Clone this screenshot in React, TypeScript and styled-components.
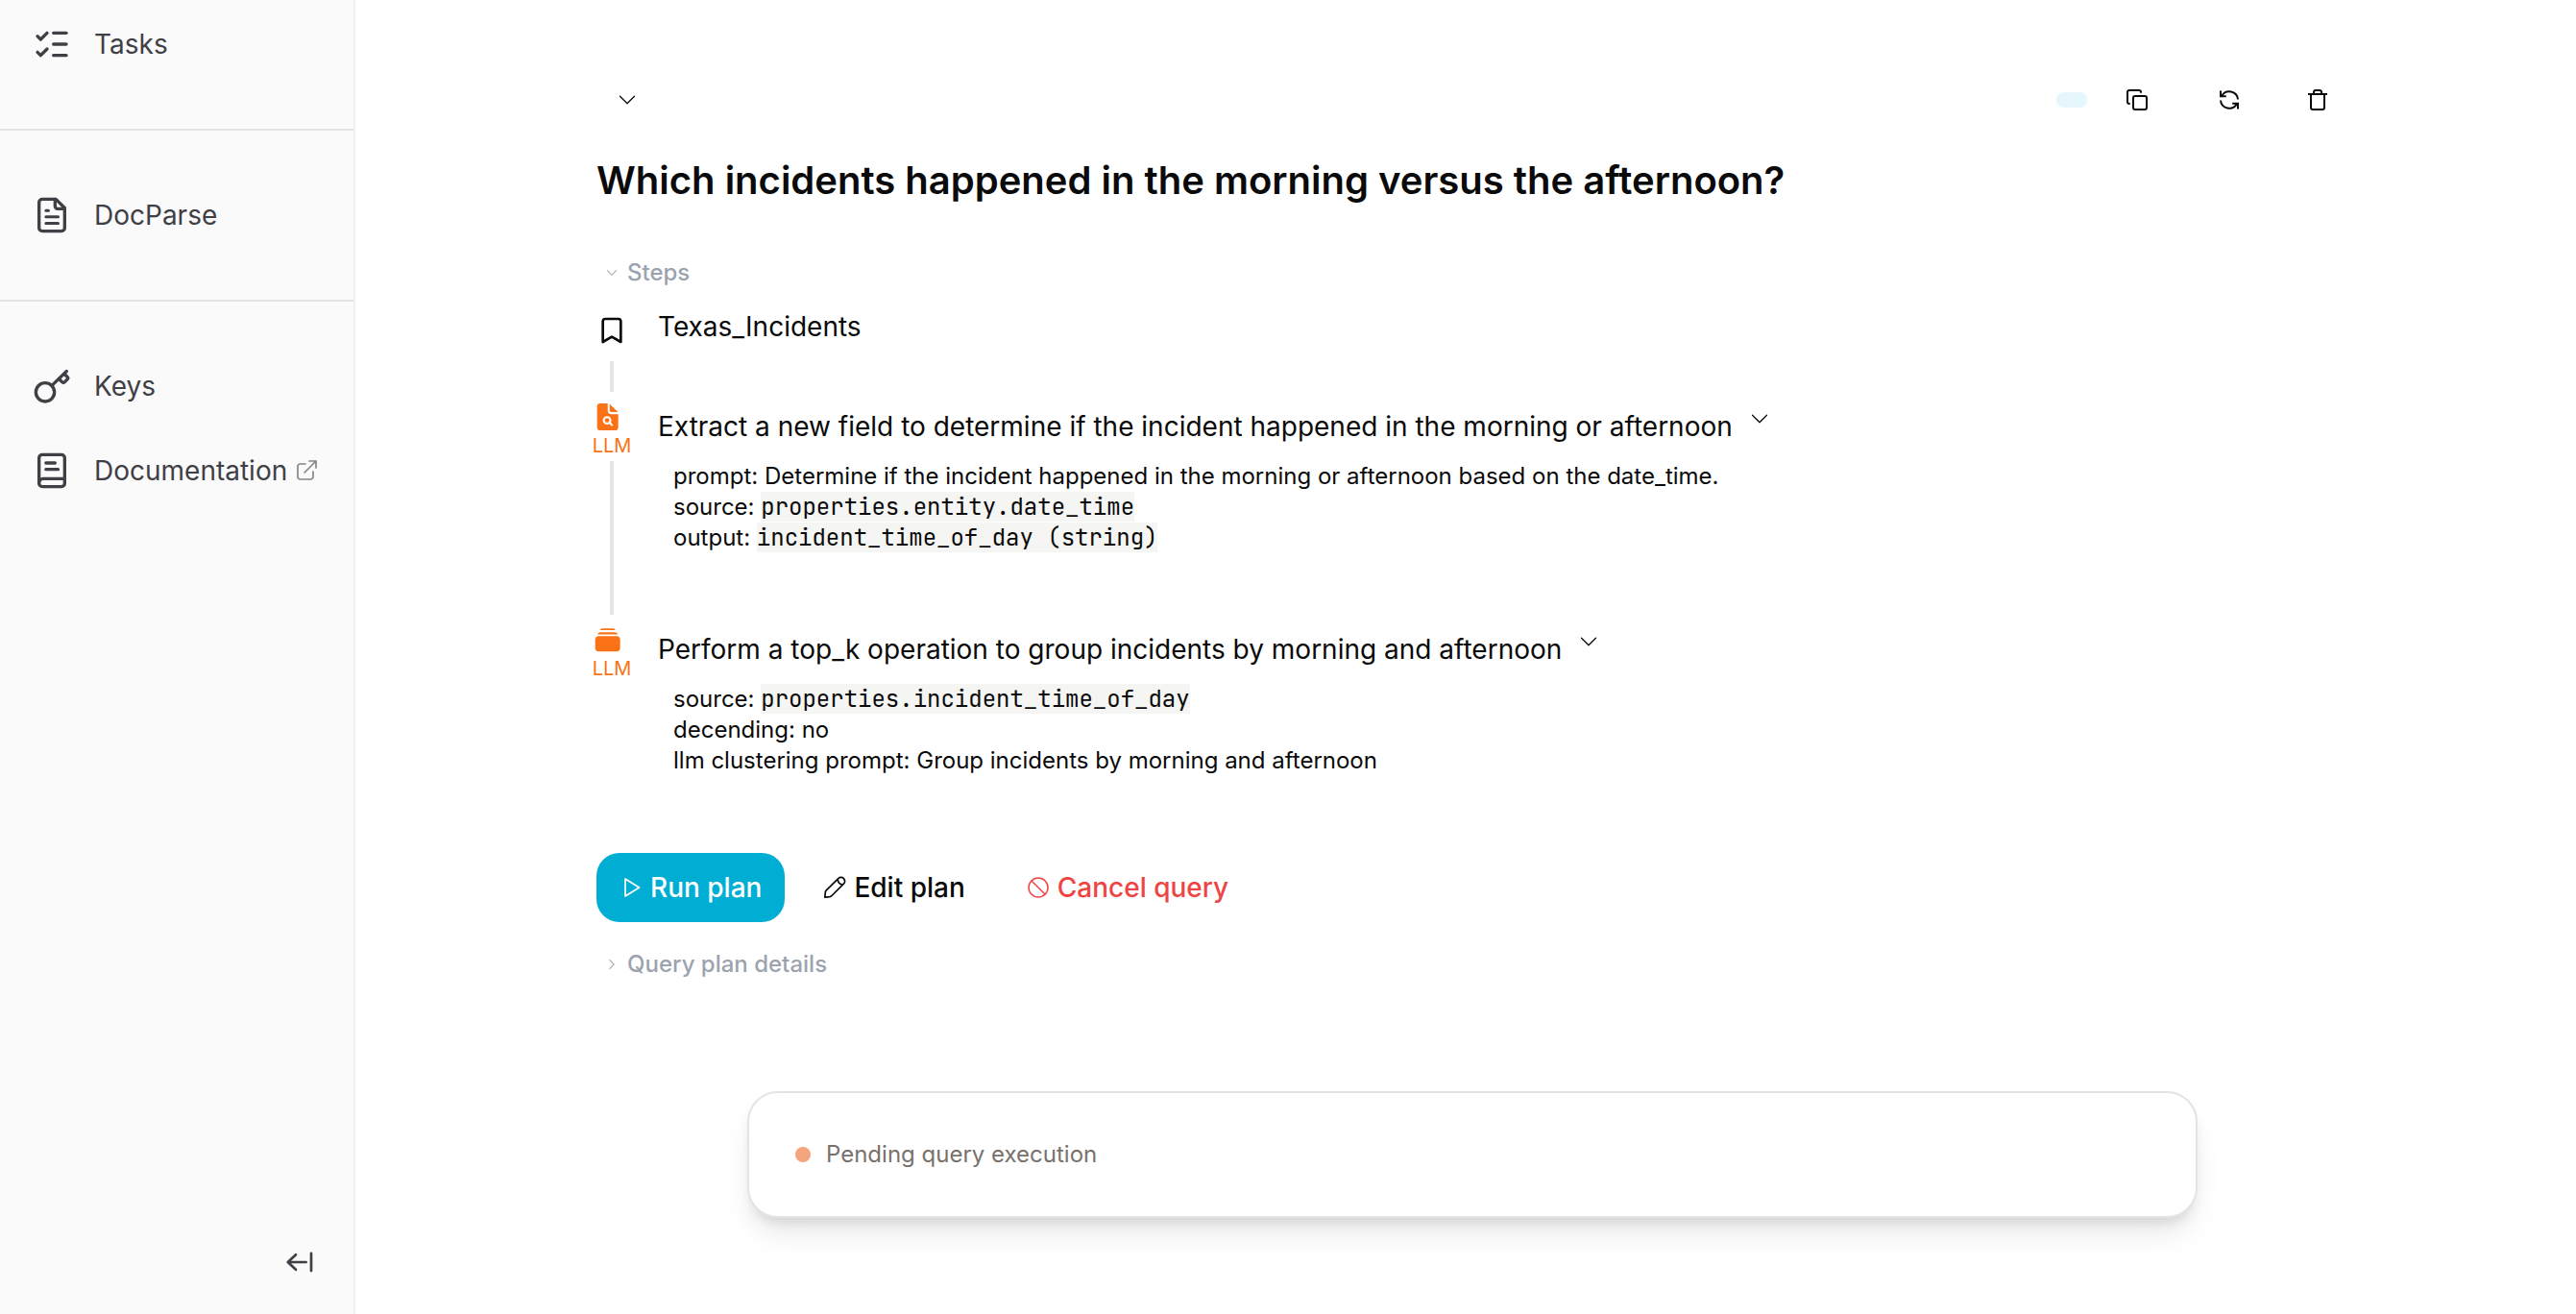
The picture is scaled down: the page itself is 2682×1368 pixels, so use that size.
import React from "react";
import styled, { createGlobalStyle } from "styled-components";
import { ListChecks, Copy, Ban, Bookmark } from "lucide-react";

const Global = createGlobalStyle`
  * { box-sizing: border-box; }
  body { margin: 0; background: #ffffff; color: #0a0a0a; font-family: Inter, "Liberation Sans", sans-serif; }
  button { font: inherit; color: inherit; background: none; border: 0; padding: 0; cursor: pointer; }
  a { color: inherit; text-decoration: none; }
  h1, h2, p, ol, ul { margin: 0; padding: 0; font-weight: 400; list-style: none; }
  svg { display: block; flex: none; }
`;

const Shell = styled.div`
  display: grid;
  grid-template-columns: 370px minmax(0, 1fr);
  min-height: 100vh;
`;

const Sidebar = styled.aside`
  display: flex;
  flex-direction: column;
  background: #fafafa;
  border-right: 2px solid #f0f0f0;
  color: #3f3f46;
`;

const NavGroup = styled.nav`
  padding: 44px 0;
  & + & { border-top: 2px solid #e4e4e4; }
  &:first-child { padding-top: 2px; }
`;

const NavLink = styled.a`
  display: flex;
  align-items: center;
  gap: 24px;
  height: 88px;
  padding: 0 34px;
  font-size: 28px;
  line-height: 40px;
`;

const NavLabel = styled.span`
  display: flex;
  align-items: center;
  gap: 8px;
  color: #3f3f46;
`;

const CollapseRow = styled.div`
  display: flex;
  justify-content: flex-end;
  margin-top: auto;
  padding: 38px 40px;
`;

const Main = styled.main`
  display: flex;
  flex-direction: column;
  padding: 80px 249px 100px 251px;
`;

const Toolbar = styled.header`
  display: flex;
  align-items: center;
  justify-content: space-between;
  height: 48px;
  padding-left: 20px;
`;

const ToolbarActions = styled.div`
  display: flex;
  align-items: center;
  gap: 28px;
`;

const ButtonGroup = styled.div`
  display: flex;
  align-items: center;
  gap: 48px;
`;

const Tag = styled.span`
  width: 32px;
  height: 16px;
  border-radius: 8px;
  background: #e5f7fc;
`;

const IconButton = styled.button<{ $width?: number }>`
  display: flex;
  align-items: center;
  justify-content: center;
  width: ${(p) => p.$width ?? 24}px;
  height: 24px;
`;

const Title = styled.h1`
  margin-top: 32px;
  font-size: 40px;
  line-height: 56px;
  font-weight: 600;
`;

const Disclosure = styled.button<{ $top: number }>`
  display: flex;
  align-items: center;
  align-self: flex-start;
  gap: 10px;
  margin-top: ${(p) => p.$top}px;
  padding-left: 10px;
  font-size: 24px;
  line-height: 32px;
  font-weight: 500;
  color: #9ca3af;
`;

const Steps = styled.ol`
  display: flex;
  flex-direction: column;
  margin-top: 20px;
`;

const Step = styled.li<{ $height: number }>`
  display: grid;
  grid-template-columns: 32px minmax(0, 1fr);
  column-gap: 32px;
  min-height: ${(p) => p.$height}px;
`;

const Rail = styled.div`
  display: flex;
  flex-direction: column;
  align-items: center;
`;

const RailLine = styled.span`
  flex: 1;
  width: 4px;
  margin-bottom: 8px;
  background: #e5e5e5;
`;

const SourceBadge = styled.div`
  padding: 8px 0 16px;
`;

const StepBadge = styled.div`
  display: flex;
  flex-direction: column;
  align-items: flex-start;
  color: #f97316;
  font-size: 20px;
  line-height: 32px;
`;

const StepTitle = styled.div<{ $top: number }>`
  display: flex;
  align-items: flex-start;
  gap: 16px;
  padding-top: ${(p) => p.$top}px;
  font-size: 28px;
  line-height: 40px;
`;

const Details = styled.div`
  padding: 16px 16px 8px;
  font-size: 24px;
  line-height: 32px;
`;

const Code = styled.code`
  font-family: "JetBrains Mono", "DejaVu Sans Mono", "Liberation Mono", monospace;
  font-size: 24px;
  background: #f5f5f4;
`;

const Actions = styled.div`
  display: flex;
  align-items: center;
  gap: 16px;
  margin-top: 72px;
`;

const ActionButton = styled.button<{ $tone: "primary" | "plain" | "danger" }>`
  display: flex;
  align-items: center;
  gap: 8px;
  height: 72px;
  padding: 0 24px;
  border-radius: 24px;
  font-size: 28px;
  line-height: 40px;
  font-weight: 500;
  background: ${(p) => (p.$tone === "primary" ? "#00aed4" : "transparent")};
  color: ${(p) => ({ primary: "#ffffff", plain: "#0a0a0a", danger: "#ef4444" })[p.$tone]};
`;

const StatusCard = styled.section`
  display: flex;
  align-items: center;
  gap: 16px;
  height: 132px;
  margin: auto 145px 0 157px;
  padding: 0 48px;
  border: 2px solid #e4e4e4;
  border-radius: 32px;
  background: #ffffff;
  box-shadow: 0 20px 30px -6px rgba(0, 0, 0, 0.1), 0 8px 12px -4px rgba(0, 0, 0, 0.1);
  color: #78716c;
  font-size: 24px;
  line-height: 32px;
`;

const StatusDot = styled.span`
  width: 16px;
  height: 16px;
  border-radius: 50%;
  background: #f4a57e;
`;

type IconProps = {
  size: number;
  stroke?: number;
  color?: string;
  children: React.ReactNode;
};

const LineIcon = ({ size, stroke = 2, color = "currentColor", children }: IconProps) => (
  <svg width={size} height={size} viewBox="0 0 24 24" fill="none" stroke={color} strokeWidth={stroke} strokeLinecap="round" strokeLinejoin="round" aria-hidden="true">
    {children}
  </svg>
);

const DocumentIcon = () => (
  <LineIcon size={40}>
    <path d="M14.5 2H6a2 2 0 0 0-2 2v16a2 2 0 0 0 2 2h12a2 2 0 0 0 2-2V7.5z" />
    <path d="M14 2v4.500a1.500 1.500 0 0 0 1.500 1.500H20" />
    <path d="M8.300 9.200h1.600M8.300 13.100h7.600M8.300 17.100h7.600" strokeWidth="1.800" />
  </LineIcon>
);

const KeyIcon = () => (
  <LineIcon size={40}>
    <circle cx="7.800" cy="15.800" r="5.800" />
    <path d="M12 11.600 21.200 2.700" />
    <path d="m16.500 7.500 2 2a1 1 0 0 0 1.400 0l1.800-1.800a1 1 0 0 0 0-1.400l-2-2" />
  </LineIcon>
);

const BookIcon = () => (
  <LineIcon size={40}>
    <rect x="4" y="2" width="16" height="20" rx="2" />
    <path d="M4 19.500a2.500 2.500 0 0 1 2.500-2.500H20M8.300 7.200h5.700M8.300 11.200h7.600" />
  </LineIcon>
);

const ExternalIcon = () => (
  <LineIcon size={24} stroke={1.7} color="#85858a">
    <path d="M11 5H5.500A2.500 2.500 0 0 0 3 7.500v11A2.500 2.500 0 0 0 5.500 21h11a2.500 2.500 0 0 0 2.500-2.500V13M10 14 22 2M15 2h7v7" />
  </LineIcon>
);

const CollapseIcon = () => (
  <LineIcon size={32}>
    <path d="M17 12H3M9 6.200 2.800 12 9 17.800M21 5.200v13.600" />
  </LineIcon>
);

const Chevron = ({ size, dir = "down" }: { size: number; dir?: "down" | "right" }) => (
  <svg width={size} height={size} viewBox="0 0 16 16" fill="currentColor" stroke="currentColor" strokeWidth={size < 16 ? 0.5 : 0} aria-hidden="true">
    {dir === "down" ? (
      <path d="M1.646 4.646a.5.5 0 0 1 .708 0L8 10.293l5.646-5.647a.5.5 0 0 1 .708.708l-6 6a.5.5 0 0 1-.708 0l-6-6a.5.5 0 0 1 0-.708z" />
    ) : (
      <path d="M4.646 1.646a.5.5 0 0 1 .708 0l6 6a.5.5 0 0 1 0 .708l-6 6a.5.5 0 0 1-.708-.708L10.293 8 4.646 2.354a.5.5 0 0 1 0-.708z" />
    )}
  </svg>
);

const RefreshIcon = () => (
  <svg width="24" height="24" viewBox="0 0 24 24" fill="none" stroke="currentColor" strokeWidth="2" aria-hidden="true">
    <path d="M21 11.500A9 9 0 0 0 4.200 7.800M3 12.500a9 9 0 0 0 16.800 3.700M3 2.500v5.700h5.800M21 21.500v-5.700h-5.800" />
  </svg>
);

const TrashIcon = () => (
  <svg width="24" height="24" viewBox="0 0 24 24" fill="none" stroke="currentColor" strokeWidth="2" aria-hidden="true">
    <path d="M2 6h20M5 6v14a2 2 0 0 0 2 2h10a2 2 0 0 0 2-2V6M8 6V4a2 2 0 0 1 2-2h4a2 2 0 0 1 2 2v2" />
  </svg>
);

const FileSearchIcon = () => (
  <svg width="32" height="32" viewBox="0 0 24 24" fill="#f97316" aria-hidden="true">
    <path d="M11.800 3v5.500a3 3 0 0 0 3 3H20V21.500a2.500 2.500 0 0 1-2.500 2.500H6a2.500 2.500 0 0 1-2.500-2.500v-16A2.500 2.500 0 0 1 6 3z" />
    <path d="M13.300 3.400 19.800 9.800h-4.500a2 2 0 0 1-2-2z" />
    <circle cx="11.300" cy="16.200" r="2.600" fill="none" stroke="#fff" strokeWidth="1.500" />
    <path d="m13.200 18 1.900 1.900" stroke="#fff" strokeWidth="1.500" strokeLinecap="round" />
  </svg>
);

const StackIcon = () => (
  <svg width="32" height="32" viewBox="0 0 24 24" fill="#f97316" aria-hidden="true">
    <rect x="2" y="10.600" width="19.500" height="12" rx="3" />
    <path d="M3.800 9.300q.700-1.700 2.200-1.700h11.500q1.500 0 2.200 1.700zM5.600 6q.700-1.400 1.900-1.400h8.500q1.200 0 1.900 1.400z" />
  </svg>
);

const PlayIcon = () => (
  <LineIcon size={24} stroke={1.7}>
    <path d="M6 3v18l14.500-9z" />
  </LineIcon>
);

const PencilIcon = () => (
  <LineIcon size={24} stroke={1.7}>
    <path d="M1.800 22.200 2.300 17q.100-1.300 1-2.200L15.800 2.600a3.900 3.900 0 0 1 5.600 0 3.900 3.900 0 0 1 0 5.600L9 20.500q-.900.900-2.200 1.100z" />
    <path d="M15.200 3.600q.400 4.800 5.200 5.400" />
  </LineIcon>
);

export default function App() {
  return (
    <>
      <Global />
      <Shell>
        <Sidebar>
          <NavGroup>
            <NavLink href="#tasks"><ListChecks size={40} /><NavLabel>Tasks</NavLabel></NavLink>
          </NavGroup>
          <NavGroup>
            <NavLink href="#docparse"><DocumentIcon /><NavLabel>DocParse</NavLabel></NavLink>
          </NavGroup>
          <NavGroup>
            <NavLink href="#keys"><KeyIcon /><NavLabel>Keys</NavLabel></NavLink>
            <NavLink href="#documentation"><BookIcon /><NavLabel>Documentation <ExternalIcon /></NavLabel></NavLink>
          </NavGroup>
          <CollapseRow>
            <button aria-label="Collapse sidebar"><CollapseIcon /></button>
          </CollapseRow>
        </Sidebar>

        <Main>
          <Toolbar>
            <IconButton aria-label="Toggle query"><Chevron size={20} /></IconButton>
            <ToolbarActions>
              <Tag />
              <ButtonGroup>
                <IconButton aria-label="Copy" $width={48}><Copy size={24} /></IconButton>
                <IconButton aria-label="Rerun" $width={48}><RefreshIcon /></IconButton>
                <IconButton aria-label="Delete" $width={40}><TrashIcon /></IconButton>
              </ButtonGroup>
            </ToolbarActions>
          </Toolbar>

          <Title>Which incidents happened in the morning versus the afternoon?</Title>

          <Disclosure $top={52} aria-expanded="true"><Chevron size={12} />Steps</Disclosure>

          <Steps>
            <Step $height={96}>
              <Rail>
                <SourceBadge><Bookmark size={32} /></SourceBadge>
                <RailLine />
              </Rail>
              <StepTitle $top={0}>Texas_Incidents</StepTitle>
            </Step>
            <Step $height={232}>
              <Rail>
                <StepBadge><FileSearchIcon />LLM</StepBadge>
                <RailLine />
              </Rail>
              <div>
                <StepTitle $top={8}>
                  Extract a new field to determine if the incident happened in the morning or afternoon
                  <IconButton aria-label="Toggle step details"><Chevron size={20} /></IconButton>
                </StepTitle>
                <Details>
                  <p>prompt: Determine if the incident happened in the morning or afternoon based on the date_time.</p>
                  <p>source: <Code>properties.entity.date_time</Code></p>
                  <p>output: <Code>incident_time_of_day (string)</Code></p>
                </Details>
              </div>
            </Step>
            <Step $height={168}>
              <Rail>
                <StepBadge><StackIcon />LLM</StepBadge>
              </Rail>
              <div>
                <StepTitle $top={8}>
                  Perform a top_k operation to group incidents by morning and afternoon
                  <IconButton aria-label="Toggle step details"><Chevron size={20} /></IconButton>
                </StepTitle>
                <Details>
                  <p>source: <Code>properties.incident_time_of_day</Code></p>
                  <p>decending: no</p>
                  <p>llm clustering prompt: Group incidents by morning and afternoon</p>
                </Details>
              </div>
            </Step>
          </Steps>

          <Actions>
            <ActionButton $tone="primary"><PlayIcon />Run plan</ActionButton>
            <ActionButton $tone="plain"><PencilIcon />Edit plan</ActionButton>
            <ActionButton $tone="danger"><Ban size={24} strokeWidth={1.5} />Cancel query</ActionButton>
          </Actions>

          <Disclosure $top={28} aria-expanded="false"><Chevron size={12} dir="right" />Query plan details</Disclosure>

          <StatusCard role="status"><StatusDot />Pending query execution</StatusCard>
        </Main>
      </Shell>
    </>
  );
}
